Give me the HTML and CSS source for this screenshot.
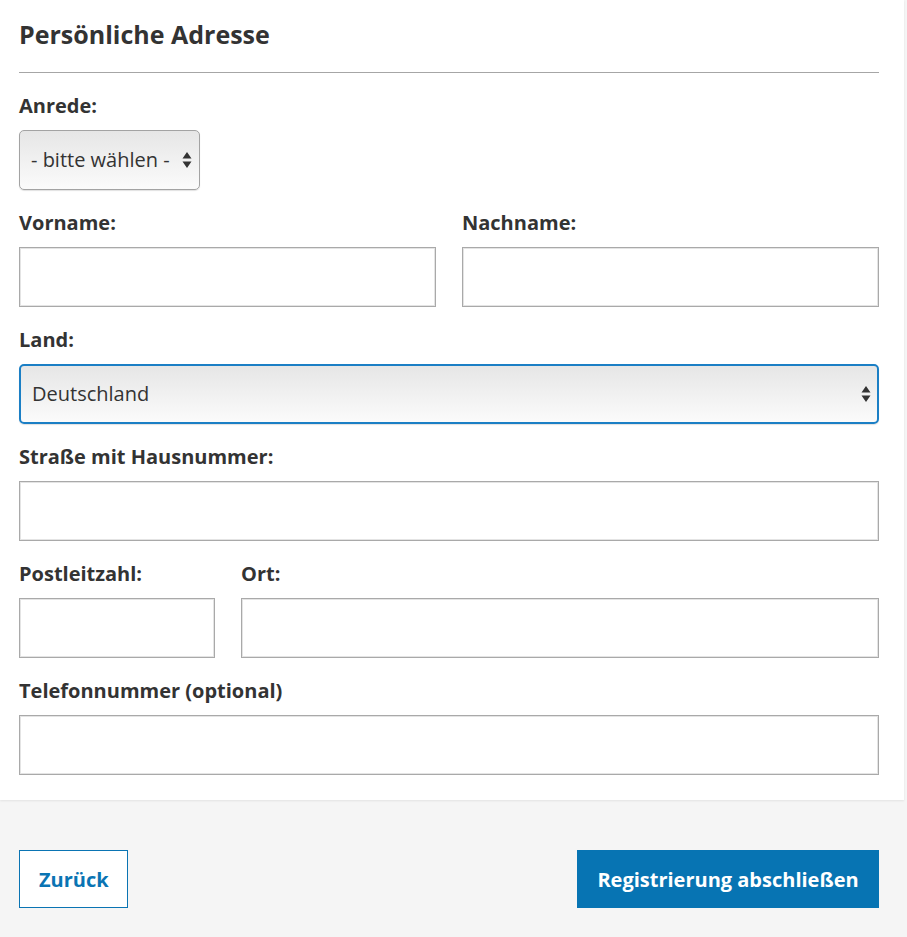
FILE: index.html
```html
<!DOCTYPE html>
<html lang="de">
<head>
<meta charset="utf-8">
<title>Persönliche Adresse</title>
<link rel="stylesheet" href="styles.css">
</head>
<body>
<div class="panel">
  <h2 class="title">Persönliche Adresse</h2>
  <hr class="rule">
  <div class="field">
    <label class="label">Anrede:</label>
    <div class="select-wrap select-small">
      <div class="select">- bitte wählen -</div>
      <svg class="arrows" width="10" height="18" viewBox="0 0 10 18"><path d="M5 1 L9.5 7.5 H0.5 Z M5 17 L9.5 10.5 H0.5 Z" fill="#333"/></svg>
    </div>
  </div>
  <div class="row two">
    <div class="field">
      <label class="label">Vorname:</label>
      <div class="input"></div>
    </div>
    <div class="field">
      <label class="label">Nachname:</label>
      <div class="input"></div>
    </div>
  </div>
  <div class="field">
    <label class="label">Land:</label>
    <div class="select-wrap">
      <div class="select focus">Deutschland</div>
      <svg class="arrows" width="10" height="18" viewBox="0 0 10 18"><path d="M5 1 L9.5 7.5 H0.5 Z M5 17 L9.5 10.5 H0.5 Z" fill="#333"/></svg>
    </div>
  </div>
  <div class="field">
    <label class="label">Straße mit Hausnummer:</label>
    <div class="input"></div>
  </div>
  <div class="row plz">
    <div class="field">
      <label class="label">Postleitzahl:</label>
      <div class="input"></div>
    </div>
    <div class="field">
      <label class="label">Ort:</label>
      <div class="input"></div>
    </div>
  </div>
  <div class="field">
    <label class="label">Telefonnummer (optional)</label>
    <div class="input"></div>
  </div>
</div>
<div class="footer">
  <button class="btn btn-outline">Zurück</button>
  <button class="btn btn-primary">Registrierung abschließen</button>
</div>
</body>
</html>
```
FILE: styles.css
```css
* { box-sizing: border-box; }
html, body { margin: 0; padding: 0; }
body {
  background: #f5f5f5;
  font-family: "Open Sans", "Liberation Sans", sans-serif;
  color: #333;
  width: 907px;
  height: 937px;
  overflow: hidden;
}
.panel {
  width: 904px;
  background: #fff;
  padding: 19px 25px 25px 19px;
  box-shadow: 0 1px 2px rgba(0,0,0,0.08);
  display: flex;
  flex-direction: column;
  gap: 21px;
}
.title {
  margin: 0;
  font-size: 25px;
  line-height: 30px;
  font-weight: 700;
  color: #333;
}
.rule {
  margin: 2px 0 0 0;
  border: 0;
  border-top: 1px solid #a6a6a6;
  height: 0;
}
.field {
  display: flex;
  flex-direction: column;
  gap: 12px;
}
.label {
  font-size: 20px;
  line-height: 24px;
  font-weight: 700;
  color: #333;
}
.row { display: grid; column-gap: 26px; }
.row.two { grid-template-columns: 1fr 1fr; }
.row.plz { grid-template-columns: 196px 1fr; }
.input {
  height: 60px;
  border: 1px solid #a9a9a9;
  box-shadow: inset 0 0 0 1px #e4e4e4;
  background: #fff;
}
.select-wrap { position: relative; }
.select-small { width: 181px; }
.select {
  height: 60px;
  border: 1px solid #a3a3a3;
  border-radius: 5px;
  background: linear-gradient(#e6e6e6, #fbfbfb);
  box-shadow: 0 1px 1px rgba(0,0,0,0.12);
  font-size: 20px;
  line-height: 58px;
  padding-left: 11px;
  color: #333;
}
.select.focus {
  border: 2px solid #1b7fc5;
  line-height: 56px;
}
.arrows {
  position: absolute;
  right: 8px;
  top: 21px;
}
.footer {
  display: flex;
  justify-content: space-between;
  padding: 50px 28px 0 19px;
}
.btn {
  height: 58px;
  font-family: "Open Sans", "Liberation Sans", sans-serif;
  font-size: 20px;
  font-weight: 700;
  padding: 0 19px;
  cursor: pointer;
}
.btn-outline {
  width: 109px;
  background: #fff;
  color: #0a74b3;
  border: 1px solid #0a74b3;
}
.btn-primary {
  width: 302px;
  background: #0774b3;
  color: #fff;
  border: 1px solid #0774b3;
}
```
